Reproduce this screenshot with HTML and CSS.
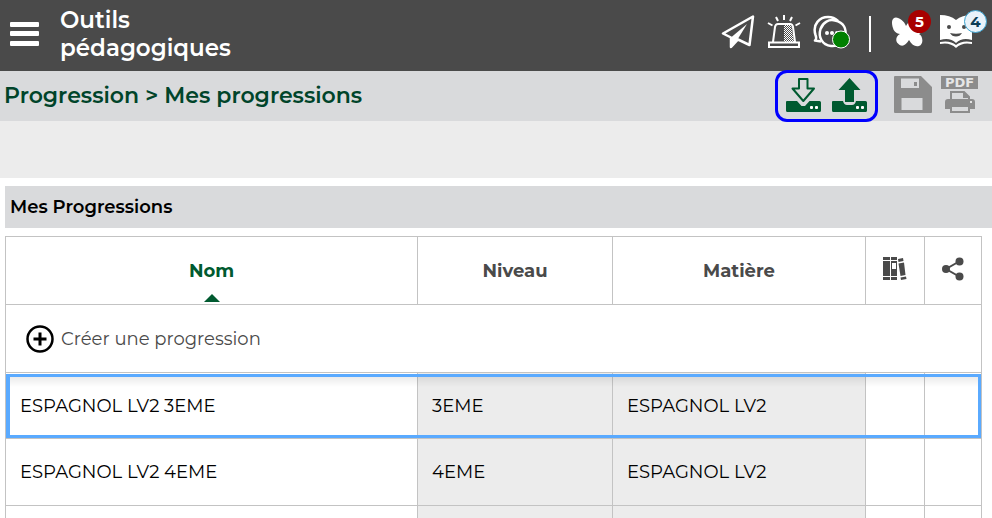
FILE: index.html
```html
<!DOCTYPE html>
<html lang="fr">
<head>
    <meta charset="UTF-8">
    <meta name="viewport" content="width=device-width, initial-scale=1.0">
    <title>Mes progressions</title>
    <link rel="stylesheet" href="styles.css">
</head>
<body>
    <header class="topbar">
        <button class="icon-btn menu-btn" aria-label="Menu">
            <svg width="30" height="26" viewBox="0 0 30 26" fill="#fff">
                <rect x="0" y="1" width="29" height="5" rx="1"/>
                <rect x="0" y="10" width="29" height="5" rx="1"/>
                <rect x="0" y="20" width="29" height="5" rx="1"/>
            </svg>
        </button>
        <h1 class="app-title">Outils pédagogiques</h1>

        <nav class="top-actions">
            <button class="icon-btn" aria-label="Messages">
                <svg width="34" height="38" viewBox="0 0 34 38">
                    <path d="M2 18.500L32 1.500L28.500 30L17 24.500L10 32V22.500Z" fill="none" stroke="#fff" stroke-width="2.500" stroke-linejoin="round"/>
                    <path d="M10 22.500L26 9L16.500 24.500L10 33Z" fill="#fff"/>
                </svg>
            </button>
            <button class="icon-btn" aria-label="Alerte">
                <svg width="34" height="38" viewBox="0 0 34 38">
                    <defs>
                        <pattern id="dots" width="2" height="2" patternUnits="userSpaceOnUse">
                            <rect width="1" height="1" fill="#fff"/>
                            <rect x="1" y="1" width="1" height="1" fill="#fff"/>
                        </pattern>
                    </defs>
                    <path d="M17 10H24L27 27H17Z" fill="url(#dots)"/>
                    <path d="M6 27L8 12Q8.500 9 11 9H23Q25.500 9 26 12L28 27M2 27.500H32V32H2Z" fill="none" stroke="#fff" stroke-width="2"/>
                    <path d="M17 0V5M9 2L11 6M25 2L23 6M1 8L5.500 10.500M33 8L28.500 10.500" stroke="#fff" stroke-width="2"/>
                </svg>
            </button>
            <button class="icon-btn" aria-label="Discussions">
                <svg width="38" height="38" viewBox="0 0 38 38">
                    <path d="M8 26.500L2 25.500Q4 24 2.500 20C-1 9 7 2 15 2C19 2 22 3 25 6" fill="none" stroke="#fff" stroke-width="2.500" stroke-linejoin="round"/>
                    <path d="M27 29Q23 31.500 18 31C9 30 5 22 7.500 14C10 7 16 4 22 5.500C31 7.500 34 14 32 22" fill="none" stroke="#fff" stroke-width="2.500"/>
                    <circle cx="14" cy="18" r="2" fill="#fff"/>
                    <circle cx="19" cy="18" r="2" fill="#fff"/>
                    <circle cx="24" cy="18" r="2" fill="#fff"/>
                    <circle cx="28" cy="24.500" r="8.500" fill="#008000" stroke="#fff"/>
                </svg>
            </button>
            <span class="separator"></span>
            <button class="icon-btn" aria-label="Papillon">
                <svg width="32" height="38" viewBox="0 0 32 38">
                    <path d="M14 11C12 5 5 1 2 3C-1 5 0 10 1 13C2 17 5 18.500 8 19C4 21 3 26 6 28.500C10 33 14 30 17 25C20 30 23 32 27 31C32 29 31 21 27 19C31 18 34 7 30 3C26 1 17 5 14 11Z" fill="#fff"/>
                </svg>
                <span class="badge badge-red">5</span>
            </button>
            <button class="icon-btn book-btn" aria-label="Cahier">
                <svg width="34" height="38" viewBox="0 0 34 38">
                    <path d="M1 0Q11 0 17 5Q23 0 33 0V25Q23 22 17 28Q11 22 1 25Z" fill="#fff"/>
                    <path d="M1 27Q11 25 17 30Q23 25 33 27V29Q23 27 17 33Q11 27 1 29Z" fill="#fff"/>
                    <circle cx="10" cy="12" r="2" fill="#4a4a4a"/>
                    <circle cx="25" cy="12" r="2" fill="#4a4a4a"/>
                    <path d="M11 18Q17 19.500 23 18Q21 21.500 17 21.500Q13 21.500 11 18Z" fill="#4a4a4a"/>
                </svg>
                <span class="badge badge-blue">4</span>
            </button>
        </nav>
    </header>

    <div class="breadcrumb-bar">
        <h2 class="breadcrumb">Progression &gt; Mes progressions</h2>
        <div class="toolbar">
            <div class="highlight">
                <button class="icon-btn" aria-label="Importer">
                    <svg width="35" height="36" viewBox="0 0 35 36">
                        <path d="M1 23H11L15.500 28H19L23.500 23H33.500Q35 23 35 24.500V32.500Q35 34 33.500 34H1.500Q0 34 0 32.500V24Q0 23 1 23Z" fill="#005a30"/>
                        <path d="M13 1H21.500V10.500H28L17.300 23L6.500 10.500H13Z" fill="#d9dadc" stroke="#005a30" stroke-width="2" stroke-linejoin="round"/>
                        <rect x="24" y="28" width="3" height="3" rx="1" fill="#fff"/>
                        <rect x="29" y="28" width="3" height="3" rx="1" fill="#fff"/>
                    </svg>
                </button>
                <button class="icon-btn" aria-label="Exporter">
                    <svg width="35" height="36" viewBox="0 0 35 36">
                        <path d="M1 23H11Q12 27 15 27H20Q23 27 24 23H33.500Q35 23 35 24.500V32.500Q35 34 33.500 34H1.500Q0 34 0 32.500V24Q0 23 1 23Z" fill="#005a30"/>
                        <path d="M17.500 0L28.500 12H22V24H13V12H6.500Z" fill="#005a30"/>
                        <rect x="24" y="28" width="3" height="3" rx="1" fill="#fff"/>
                        <rect x="29" y="28" width="3" height="3" rx="1" fill="#fff"/>
                    </svg>
                </button>
            </div>
            <button class="icon-btn" aria-label="Enregistrer">
                <svg width="38" height="40" viewBox="0 0 38 40">
                    <path fill-rule="evenodd" d="M1 0H27L38 11V36Q38 37 37 37H1Q0 37 0 36V1Q0 0 1 0ZM7 2.500V12H25V2.500ZM7.500 22V34H28.500V22Z" fill="#8c8c8c"/>
                    <rect x="20" y="6" width="3" height="4" fill="#8c8c8c"/>
                </svg>
            </button>
            <button class="icon-btn pdf-btn" aria-label="Imprimer en PDF">
                <span class="pdf-label">PDF</span>
                <svg width="30" height="25" viewBox="0 0 30 25">
                    <path d="M6 10V1H19L24 6V10" fill="none" stroke="#8c8c8c" stroke-width="2"/>
                    <path d="M18 0V7H25Z" fill="#8c8c8c"/>
                    <path fill-rule="evenodd" d="M3 8H27Q30 8 30 11V18H25V22H5V18H0V11Q0 8 3 8ZM7 16V20H23V16Z" fill="#8c8c8c"/>
                    <circle cx="26" cy="11" r="1" fill="#fff"/>
                </svg>
            </button>
        </div>
    </div>

    <div class="filter-bar"></div>

    <main class="content">
        <h3 class="section-title">Mes Progressions</h3>

        <table class="progressions">
            <colgroup>
                <col>
                <col class="col-level">
                <col class="col-subject">
                <col class="col-library">
                <col class="col-share">
            </colgroup>
            <thead>
                <tr>
                    <th class="sorted">Nom<span class="sort-arrow"></span></th>
                    <th>Niveau</th>
                    <th>Matière</th>
                    <th class="icon-head" aria-label="Bibliothèque">
                        <svg width="24" height="24" viewBox="0 0 24 24" fill="#4a4a4a">
                            <path d="M0 0H7V3H0ZM8 0H14V3H8ZM0 4H7V19H0ZM0 20H7V23H0ZM8 20H14V23H8Z"/>
                            <path fill-rule="evenodd" d="M8 4H14V19H8ZM9 6V12H13V6Z"/>
                            <path d="M15 2L20 1L20.500 4L15.500 5ZM15.500 6.500L21 5.500L22.500 18L17.500 19ZM17.500 20.500L23 19.500L23.500 22L18 23Z"/>
                        </svg>
                    </th>
                    <th class="icon-head" aria-label="Partage">
                        <svg width="24" height="24" viewBox="0 0 24 24">
                            <path d="M19 4L5 12L19 20" fill="none" stroke="#4a4a4a" stroke-width="2"/>
                            <g fill="#4a4a4a">
                                <circle cx="18.500" cy="4.500" r="4"/>
                                <circle cx="5" cy="12" r="4"/>
                                <circle cx="18.500" cy="19.500" r="4"/>
                            </g>
                        </svg>
                    </th>
                </tr>
            </thead>
            <tbody>
                <tr class="create-row">
                    <td colspan="5">
                        <button class="create-btn">
                            <svg width="28" height="28" viewBox="0 0 28 28" fill="none" stroke="#000">
                                <circle cx="14" cy="14" r="12.500" stroke-width="2.500"/>
                                <path d="M14 7.500V20.500M7.500 14H20.500" stroke-width="3"/>
                            </svg>
                            Créer une progression
                        </button>
                    </td>
                </tr>
                <tr class="selected">
                    <td>ESPAGNOL LV2 3EME</td>
                    <td class="locked">3EME</td>
                    <td class="locked">ESPAGNOL LV2</td>
                    <td></td>
                    <td></td>
                </tr>
                <tr>
                    <td>ESPAGNOL LV2 4EME</td>
                    <td class="locked">4EME</td>
                    <td class="locked">ESPAGNOL LV2</td>
                    <td></td>
                    <td></td>
                </tr>
                <tr>
                    <td></td>
                    <td class="locked"></td>
                    <td class="locked"></td>
                    <td></td>
                    <td></td>
                </tr>
            </tbody>
        </table>
    </main>
</body>
</html>
```
FILE: styles.css
```css
* {
    box-sizing: border-box;
}

body {
    display: flex;
    flex-direction: column;
    margin: 0;
    height: 100vh;
    font-family: Montserrat, Inter, "Open Sans", sans-serif;
    font-size: 18px;
    color: #000;
    background: #fff;
}

h1, h2, h3 {
    margin: 0;
    font-weight: 600;
}

svg {
    display: block;
}

.icon-btn {
    position: relative;
    padding: 0;
    border: none;
    background: none;
    cursor: pointer;
}

/* Top bar */
.topbar {
    display: flex;
    align-items: center;
    padding: 6px 5px 9px 10px;
    background: #4a4a4a;
    color: #fff;
}

.app-title {
    width: min-content;
    margin-left: 20px;
    font-size: 23px;
    line-height: 28px;
}

.top-actions {
    display: flex;
    align-items: center;
    gap: 12px;
    margin-left: auto;
}

.separator {
    width: 2px;
    height: 36px;
    margin: 0 9px 0 6px;
    background: #fff;
}

.book-btn {
    margin-right: 14px;
    margin-left: 3px;
}

.badge {
    position: absolute;
    top: -5px;
    left: 16px;
    width: 23px;
    height: 23px;
    border-radius: 50%;
    font-family: Montserrat, Inter, sans-serif;
    font-size: 15px;
    font-weight: 700;
    line-height: 23px;
    text-align: center;
}

.badge-red {
    background: #a80000;
    color: #fff;
}

.badge-blue {
    left: 25px;
    border: 1px solid #3ba3d0;
    background: #e8f2fa;
    color: #0b3c55;
    line-height: 21px;
}

/* Breadcrumb and tools */
.breadcrumb-bar {
    display: flex;
    flex-shrink: 0;
    align-items: center;
    justify-content: space-between;
    height: 50px;
    padding: 0 14px 0 4px;
    background: #d9dadc;
}

.breadcrumb {
    font-size: 22px;
    line-height: 28px;
    color: #00442a;
}

.toolbar {
    position: relative;
    display: flex;
    align-items: center;
    gap: 9px;
}

.highlight {
    display: flex;
    align-items: center;
    gap: 11px;
    height: 52px;
    margin-right: 7px;
    padding: 0 8px;
    border: 3px solid #00f;
    border-radius: 12px;
}

.pdf-btn {
    display: flex;
    flex-direction: column;
    align-items: center;
    gap: 2px;
}

.pdf-label {
    width: 37px;
    background: #8c8c8c;
    color: #e6e6e6;
    font-family: "DejaVu Sans", sans-serif;
    font-size: 13px;
    font-weight: 700;
    line-height: 13px;
    text-align: center;
}

.filter-bar {
    flex-shrink: 0;
    height: 57px;
    background: #ececec;
}

/* Progressions list */
.content {
    flex: 1;
    min-height: 0;
    padding: 8px 0 0 5px;
    overflow: hidden;
}

.section-title {
    padding: 7px 5px;
    background: #d9dadc;
    font-size: 18px;
    line-height: 28px;
}

.progressions {
    width: calc(100% - 10px);
    margin-top: 8px;
    border-collapse: collapse;
    table-layout: fixed;
}

.col-level {
    width: 195px;
}

.col-subject {
    width: 253px;
}

.col-library {
    width: 59px;
}

.col-share {
    width: 57px;
}

.progressions th,
.progressions td {
    height: 67px;
    padding: 0 14px;
    border: 1px solid #c3c3c3;
    text-align: left;
}

.progressions th {
    position: relative;
    height: 68px;
    color: #4a4a4a;
    font-weight: 700;
    text-align: center;
}

.progressions .icon-head {
    padding-bottom: 4px;
}

.progressions th svg {
    margin: 0 auto;
}

.progressions .sorted {
    color: #005a30;
}

.sort-arrow {
    position: absolute;
    bottom: 2px;
    left: 50%;
    border: 8px solid transparent;
    border-top: 0;
    border-bottom-color: #005a30;
    transform: translateX(-50%);
}

.progressions .create-row td {
    height: 68px;
    padding: 0 20px;
}

.create-btn {
    display: flex;
    align-items: center;
    gap: 7px;
    padding: 0;
    border: none;
    background: none;
    color: #4a4a4a;
    font: inherit;
    cursor: pointer;
}

.progressions .locked {
    background: #ececec;
}

.selected {
    position: relative;
}

.progressions .selected td {
    height: 66px;
}

.selected td:first-child::after {
    content: "";
    position: absolute;
    inset: 1px 1px 1px 0;
    border: 3px solid #5aaaff;
    border-left-width: 4px;
    background: linear-gradient(rgba(0, 0, 0, 0.08), transparent 10px);
    pointer-events: none;
}
```
